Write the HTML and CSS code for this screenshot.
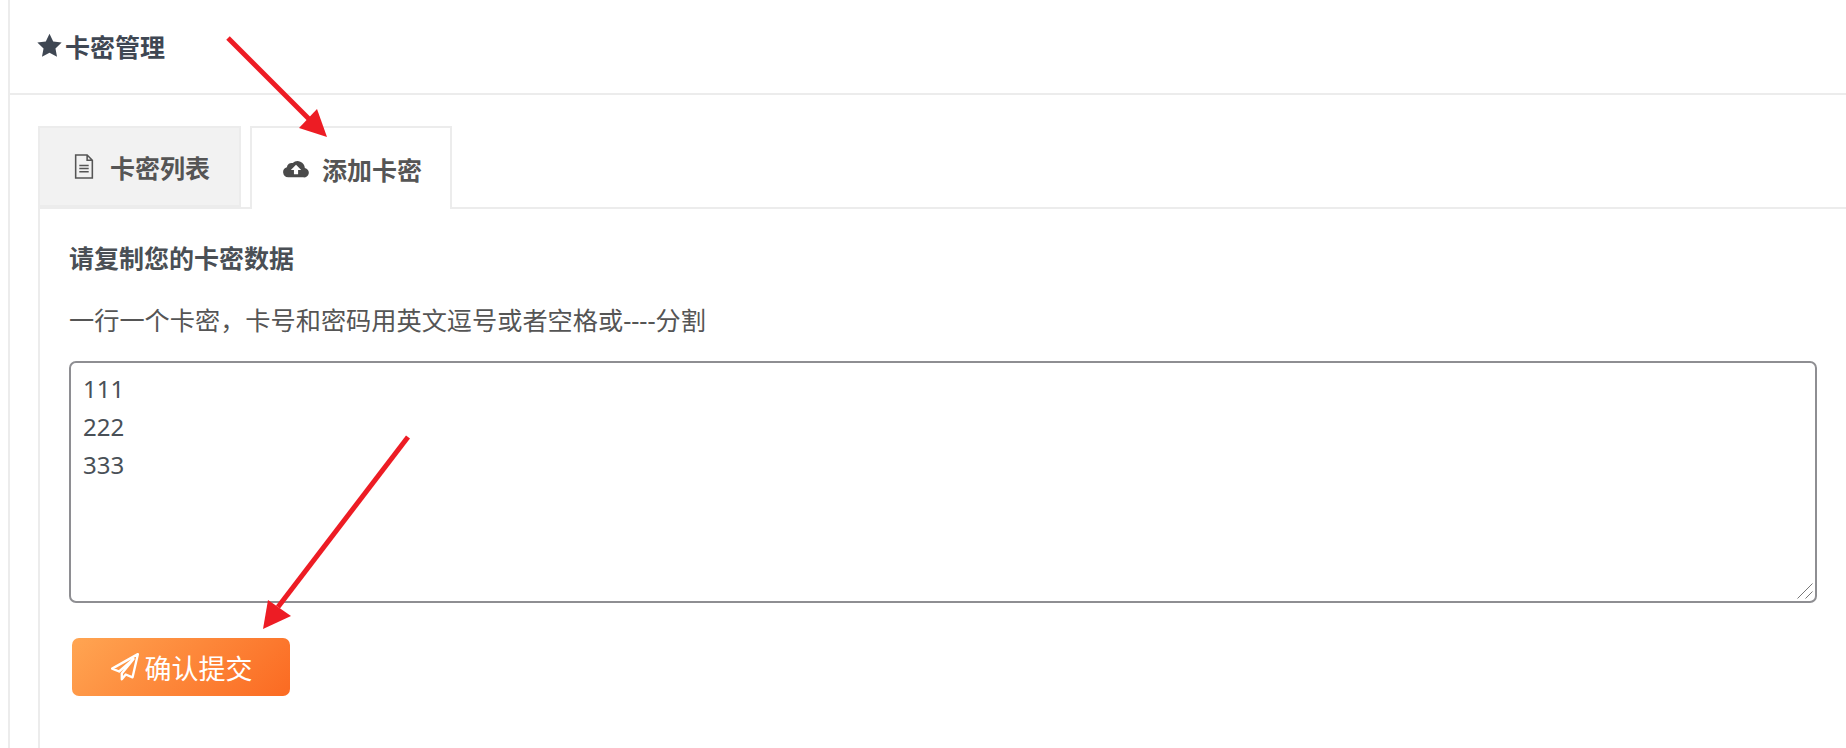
FILE: index.html
```html
<!DOCTYPE html>
<html lang="zh-CN">
<head>
    <meta charset="UTF-8">
    <title>卡密管理</title>
    <link rel="stylesheet" href="styles.css">
</head>
<body>

<div class="panel">
    <div class="panel-head">
        <svg class="icon-star" viewBox="0 0 24 24"><path d="M12 1.500l3.300 6.900 7.500 1-5.500 5.200 1.400 7.500L12 18.500l-6.700 3.600 1.400-7.500L1.200 9.400l7.500-1z"/></svg>
        <span class="panel-title">卡密管理</span>
    </div>

    <div class="panel-body">
        <div class="tabs">
            <div class="tab tab-list">
                <svg class="tab-icon" viewBox="0 0 20 24"><path d="M2 1h11l5 5v17H2z M13 1v5h5 M5.500 11h9 M5.500 14h9 M5.500 17h9" fill="none" stroke="currentColor" stroke-width="1.500"/></svg>
                <span>卡密列表</span>
            </div>
            <div class="tab tab-active">
                <svg class="tab-icon tab-icon-cloud" viewBox="0 0 26 20"><path d="M6 18.500a5 5 0 0 1-1.300-9.800 4.500 4.500 0 0 1 5.600-3.900A7 7 0 0 1 22 9.500a4.500 4.500 0 0 1-1.500 9z"/><path d="M13.500 6.500l-5 5h3v4h4v-4h3z" fill="#fff"/></svg>
                <span>添加卡密</span>
            </div>
        </div>

        <div class="tab-content">
            <h4 class="form-title">请复制您的卡密数据</h4>
            <p class="form-hint">一行一个卡密，卡号和密码用英文逗号或者空格或----分割</p>
            <div class="input-wrap">
                <textarea class="card-input">111
222
333</textarea>
                <svg class="grip" viewBox="0 0 16 16"><path d="M15.500 .500L.500 15.500 M15.500 8.500L8.500 15.500" stroke="#777" stroke-width="1" fill="none"/></svg>
            </div>
            <button class="btn-submit">
                <svg class="btn-icon" viewBox="0 0 28 28"><path d="M26 2L2 15.500l6.500 2.700L22 6.500 11 20v5.500l3.700-4.500 6.300 2.700z" fill="none" stroke="currentColor" stroke-width="2.200" stroke-linejoin="round"/></svg>
                <span>确认提交</span>
            </button>
        </div>
    </div>
</div>

<!-- красные стрелки поверх скриншота -->
<svg class="arrows" viewBox="0 0 1846 748">
    <path d="M228 38L310 120" stroke="#ed1c24" stroke-width="5" fill="none"/>
    <path d="M327 137L299 128L317 109z" fill="#ed1c24"/>
    <path d="M408 437L278 607" stroke="#ed1c24" stroke-width="5" fill="none"/>
    <path d="M263 629L268 600L291 616z" fill="#ed1c24"/>
</svg>

</body>
</html>
```

FILE: styles.css
```css
body {
    margin: 0;
    height: 748px;
    overflow: hidden;
    background: #fff;
    color: #3c4650;
    font-family: "Noto Sans", "Noto Sans CJK SC", sans-serif;
    font-size: 25px;
    position: relative;
}

.panel {
    margin-left: 8px;
    height: 748px;
    border-left: 2px solid #ececec;
}

.panel-head {
    height: 91px;
    padding: 0 0 2px 26px;
    border-bottom: 2px solid #ececec;
    display: flex;
    align-items: center;
    gap: 2px;
}

.icon-star {
    width: 27px;
    height: 27px;
    fill: #3f4753;
}

.panel-title {
    font-weight: 700;
    color: #3f4753;
}

.panel-body {
    padding: 31px 0 0 28px;
}

.tabs {
    display: flex;
    gap: 9px;
    height: 81px;
    border-bottom: 2px solid #ececec;
}

.tab {
    width: 202px;
    height: 81px;
    box-sizing: border-box;
    padding-left: 2px;
    border: 2px solid #ececec;
    background: #f2f2f2;
    color: #555;
    font-weight: 700;
    display: flex;
    align-items: center;
    justify-content: center;
    gap: 13px;
}

.tab-list {
    width: 203px;
    padding-left: 4px;
    gap: 15px;
}

.tab-active {
    height: 83px;
    background: #fff;
    border-bottom: none;
}

.tab-icon {
    width: 22px;
    height: 25px;
}

.tab-icon-cloud {
    width: 27px;
    height: 21px;
    fill: #4a4a4a;
}

.tab-content {
    box-sizing: border-box;
    height: 541px;
    border-left: 2px solid #ececec;
    padding: 31px 29px 0 29px;
}

.form-title {
    margin: 0;
    font-size: 25px;
    font-weight: 700;
    line-height: 36px;
    color: #4a4f55;
}

.form-hint {
    margin: 26px 0 0;
    font-size: 25.2px;
    line-height: 36px;
    color: #555;
}

.input-wrap {
    position: relative;
    margin-top: 23px;
}

.card-input {
    display: block;
    box-sizing: border-box;
    width: 100%;
    height: 242px;
    padding: 7px 12px;
    border: 2px solid #8e8e92;
    border-radius: 7px;
    font-family: inherit;
    font-size: 24px;
    line-height: 38px;
    color: #495057;
    outline: none;
    resize: none;
}

.grip {
    position: absolute;
    right: 4px;
    bottom: 4px;
    width: 16px;
    height: 16px;
}

.btn-submit {
    display: flex;
    align-items: center;
    justify-content: center;
    gap: 5px;
    width: 218px;
    height: 58px;
    margin: 35px 0 0 3px;
    border: none;
    border-radius: 7px;
    background: linear-gradient(135deg, #ffa552, #fb6a22);
    color: #fff;
    font-family: inherit;
    font-size: 27px;
    cursor: pointer;
}

.btn-icon {
    width: 30px;
    height: 30px;
}

.arrows {
    position: absolute;
    left: 0;
    top: 0;
    width: 1846px;
    height: 748px;
    pointer-events: none;
}
```
